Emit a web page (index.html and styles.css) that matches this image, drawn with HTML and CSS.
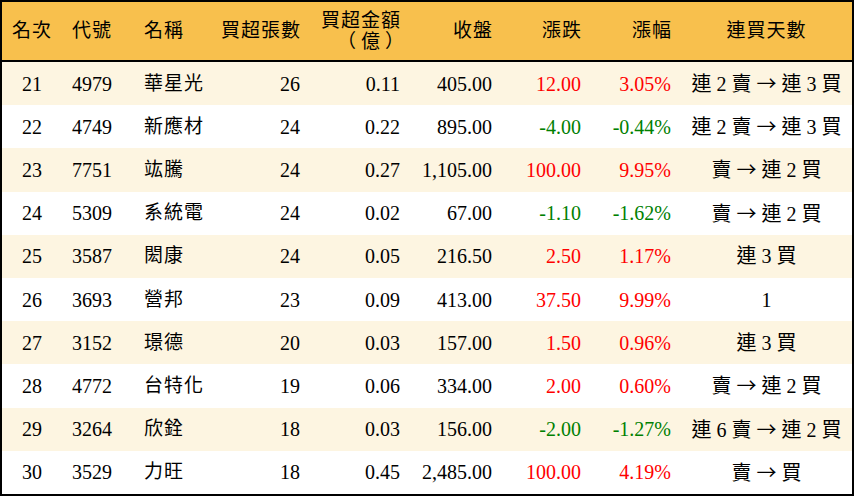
FILE: index.html
```html
<!DOCTYPE html>
<html lang="zh-Hant">
<head>
<meta charset="utf-8">
<title>連買排行</title>
<link rel="stylesheet" href="styles.css">
</head>
<body>
<div class="board">
<table class="rank">
<colgroup>
<col class="c-rank"><col class="c-code"><col class="c-name"><col class="c-vol"><col class="c-amt"><col class="c-close"><col class="c-chg"><col class="c-pct"><col class="c-days">
</colgroup>
<thead>
<tr>
<th class="ctr">名次</th>
<th class="ctr">代號</th>
<th class="lft">名稱</th>
<th class="rgt">買超張數</th>
<th class="rgt two"><span class="hl">買超金額</span><span class="hl unit"><span class="po">（</span>億<span class="pc">）</span></span></th>
<th class="rgt">收盤</th>
<th class="rgt">漲跌</th>
<th class="rgt">漲幅</th>
<th class="ctr">連買天數</th>
</tr>
</thead>
<tbody>
<tr class="alt"><td class="ctr">21</td><td class="ctr">4979</td><td class="lft nm">華星光</td><td class="rgt">26</td><td class="rgt">0.11</td><td class="rgt">405.00</td><td class="rgt up">12.00</td><td class="rgt up">3.05%</td><td class="ctr">連 2 賣 <span class="arr">→</span> 連 3 買</td></tr>
<tr><td class="ctr">22</td><td class="ctr">4749</td><td class="lft nm">新應材</td><td class="rgt">24</td><td class="rgt">0.22</td><td class="rgt">895.00</td><td class="rgt down">-4.00</td><td class="rgt down">-0.44%</td><td class="ctr">連 2 賣 <span class="arr">→</span> 連 3 買</td></tr>
<tr class="alt"><td class="ctr">23</td><td class="ctr">7751</td><td class="lft nm">竑騰</td><td class="rgt">24</td><td class="rgt">0.27</td><td class="rgt">1,105.00</td><td class="rgt up">100.00</td><td class="rgt up">9.95%</td><td class="ctr">賣 <span class="arr">→</span> 連 2 買</td></tr>
<tr><td class="ctr">24</td><td class="ctr">5309</td><td class="lft nm">系統電</td><td class="rgt">24</td><td class="rgt">0.02</td><td class="rgt">67.00</td><td class="rgt down">-1.10</td><td class="rgt down">-1.62%</td><td class="ctr">賣 <span class="arr">→</span> 連 2 買</td></tr>
<tr class="alt"><td class="ctr">25</td><td class="ctr">3587</td><td class="lft nm">閎康</td><td class="rgt">24</td><td class="rgt">0.05</td><td class="rgt">216.50</td><td class="rgt up">2.50</td><td class="rgt up">1.17%</td><td class="ctr">連 3 買</td></tr>
<tr><td class="ctr">26</td><td class="ctr">3693</td><td class="lft nm">營邦</td><td class="rgt">23</td><td class="rgt">0.09</td><td class="rgt">413.00</td><td class="rgt up">37.50</td><td class="rgt up">9.99%</td><td class="ctr">1</td></tr>
<tr class="alt"><td class="ctr">27</td><td class="ctr">3152</td><td class="lft nm">璟德</td><td class="rgt">20</td><td class="rgt">0.03</td><td class="rgt">157.00</td><td class="rgt up">1.50</td><td class="rgt up">0.96%</td><td class="ctr">連 3 買</td></tr>
<tr><td class="ctr">28</td><td class="ctr">4772</td><td class="lft nm">台特化</td><td class="rgt">19</td><td class="rgt">0.06</td><td class="rgt">334.00</td><td class="rgt up">2.00</td><td class="rgt up">0.60%</td><td class="ctr">賣 <span class="arr">→</span> 連 2 買</td></tr>
<tr class="alt"><td class="ctr">29</td><td class="ctr">3264</td><td class="lft nm">欣銓</td><td class="rgt">18</td><td class="rgt">0.03</td><td class="rgt">156.00</td><td class="rgt down">-2.00</td><td class="rgt down">-1.27%</td><td class="ctr">連 6 賣 <span class="arr">→</span> 連 2 買</td></tr>
<tr><td class="ctr">30</td><td class="ctr">3529</td><td class="lft nm">力旺</td><td class="rgt">18</td><td class="rgt">0.45</td><td class="rgt">2,485.00</td><td class="rgt up">100.00</td><td class="rgt up">4.19%</td><td class="ctr">賣 <span class="arr">→</span> 買</td></tr>
</tbody>
</table>
</div>
</body>
</html>
```
FILE: styles.css
```css
html, body {
  margin: 0;
  padding: 0;
  background: #ffffff;
}

.board {
  width: 854px;
  height: 496px;
  box-sizing: border-box;
  border: 2px solid #000000;
  overflow: hidden;
  background: #ffffff;
}

.rank {
  width: 850px;
  border-collapse: collapse;
  border-spacing: 0;
  table-layout: fixed;
  font-family: "Liberation Serif", "Noto Sans CJK TC", serif;
  font-size: 20px;
  font-weight: 400;
  color: #000000;
}

.c-rank { width: 60px; }
.c-code { width: 60px; }
.c-name { width: 98px; }
.c-vol { width: 90px; }
.c-amt { width: 100px; }
.c-close { width: 92px; }
.c-chg { width: 89px; }
.c-pct { width: 90px; }
.c-days { width: 171px; }

.rank th {
  height: 58px;
  padding: 0;
  background: #f8c04d;
  border-bottom: 2px solid #000000;
  font-weight: 400;
  font-size: 19px;
  letter-spacing: 1px;
  line-height: 22px;
  vertical-align: middle;
  white-space: nowrap;
}

.hl {
  display: block;
  height: 21px;
  line-height: 21px;
}

.unit {
  margin-right: -4px;
}

.po {
  padding-right: 4px;
}

.pc {
  padding-left: 4px;
}

.rank td {
  height: 43.2px;
  padding: 0;
  line-height: 24px;
  vertical-align: middle;
  white-space: nowrap;
}

.rank td.nm {
  font-size: 19px;
  letter-spacing: 1px;
}

.rank tbody tr.alt td {
  background: #fdf5e1;
}

.arr {
  font-family: "Noto Sans CJK TC", sans-serif;
  font-size: 20px;
}

.ctr { text-align: center; }
.lft { text-align: left; }
.rank .lft { padding-left: 22px; }
.rank .rgt { text-align: right; padding-right: 10px; }
.rank th.rgt { padding-right: 9px; }

.up { color: #ff0000; }
.down { color: #008000; }
```
